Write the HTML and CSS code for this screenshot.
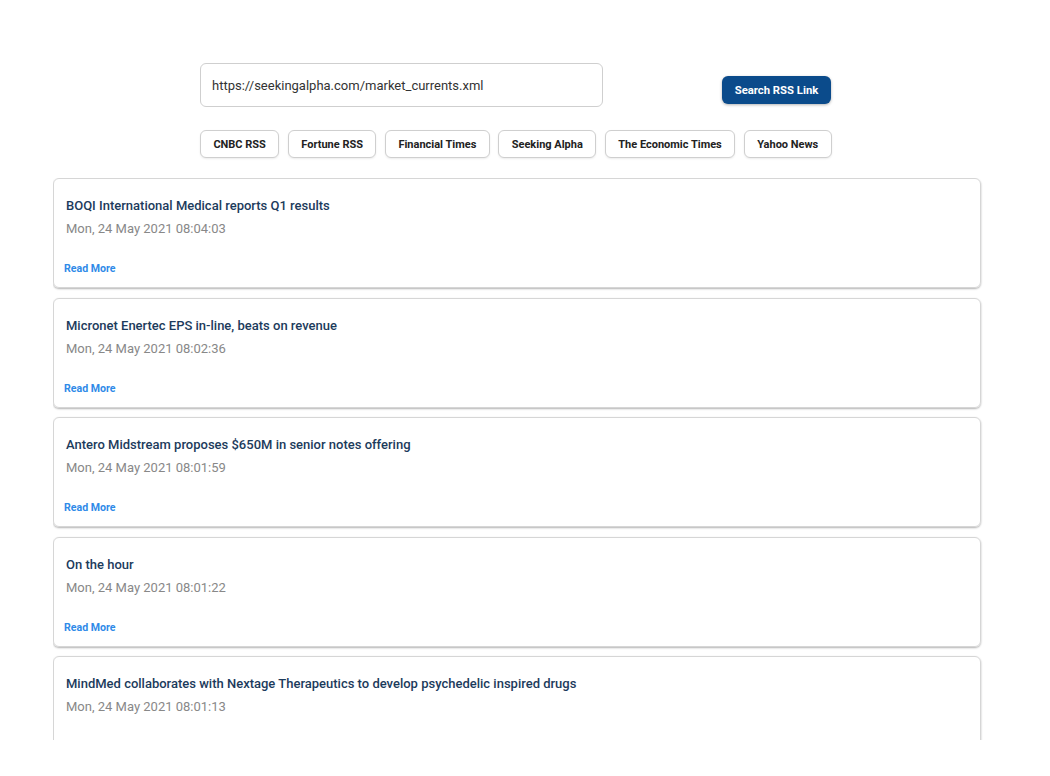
FILE: index.html
```html
<!DOCTYPE html>
<html>
<head>
<meta charset="utf-8">
<link rel="stylesheet" href="styles.css">
</head>
<body>
<div class="page">
  <div class="search-row">
    <input class="url-input" type="text" value="https://seekingalpha.com/market_currents.xml">
    <button class="search-btn">Search RSS Link</button>
  </div>
  <div class="chips">
    <button class="chip">CNBC RSS</button>
    <button class="chip">Fortune RSS</button>
    <button class="chip">Financial Times</button>
    <button class="chip">Seeking Alpha</button>
    <button class="chip">The Economic Times</button>
    <button class="chip">Yahoo News</button>
  </div>
  <div class="feed">
    <div class="card">
      <div class="title">BOQI International Medical reports Q1 results</div>
      <div class="date">Mon, 24 May 2021 08:04:03</div>
      <a class="more">Read More</a>
    </div>
    <div class="card">
      <div class="title">Micronet Enertec EPS in-line, beats on revenue</div>
      <div class="date">Mon, 24 May 2021 08:02:36</div>
      <a class="more">Read More</a>
    </div>
    <div class="card">
      <div class="title">Antero Midstream proposes $650M in senior notes offering</div>
      <div class="date">Mon, 24 May 2021 08:01:59</div>
      <a class="more">Read More</a>
    </div>
    <div class="card">
      <div class="title">On the hour</div>
      <div class="date">Mon, 24 May 2021 08:01:22</div>
      <a class="more">Read More</a>
    </div>
    <div class="card">
      <div class="title">MindMed collaborates with Nextage Therapeutics to develop psychedelic inspired drugs</div>
      <div class="date">Mon, 24 May 2021 08:01:13</div>
    </div>
  </div>
</div>
</body>
</html>
```

FILE: styles.css
```css
* { box-sizing: border-box; }
html, body {
  margin: 0;
  padding: 0;
  background: #fff;
  font-family: Roboto, "Liberation Sans", sans-serif;
}
.page {
  width: 1050px;
  height: 776px;
  padding-top: 63px;
}
.search-row {
  display: flex;
  align-items: flex-start;
  margin-left: 200px;
}
.url-input {
  width: 403px;
  height: 44px;
  border: 1px solid #cfcfcf;
  border-radius: 6px;
  padding: 0 11px;
  font-family: Roboto, "Liberation Sans", sans-serif;
  font-size: 13px;
  color: #333;
  outline: none;
}
.search-btn {
  margin-left: 119px;
  margin-top: 13px;
  width: 109px;
  height: 28px;
  border: none;
  border-radius: 6px;
  background: #0b4b8b;
  color: #fff;
  font-family: Roboto, "Liberation Sans", sans-serif;
  font-weight: 700;
  font-size: 11.3px;
  box-shadow: 0 1px 3px rgba(0,0,0,0.3);
  padding: 0;
}
.chips {
  display: flex;
  gap: 8.6px;
  margin-left: 200px;
  margin-top: 23px;
}
.chip {
  height: 28px;
  padding: 0 12.4px;
  border: 1px solid #cfcfcf;
  border-radius: 6px;
  background: #fff;
  color: #222;
  font-family: Roboto, "Liberation Sans", sans-serif;
  font-weight: 700;
  font-size: 11px;
  box-shadow: 0 1px 2px rgba(0,0,0,0.08);
}
.feed {
  margin-top: 20px;
  margin-left: 53px;
  width: 930px;
  height: 562px;
  overflow: hidden;
  display: flex;
  flex-direction: column;
  gap: 9.5px;
  padding-right: 2px;
}
.card {
  flex: none;
  width: 928px;
  height: 110px;
  border: 1px solid #d6d6d6;
  border-radius: 6px;
  box-shadow: 0 1px 2px rgba(0,0,0,0.3);
  padding: 17px 12px 0 12px;
  display: flex;
  flex-direction: column;
}
.title {
  font-size: 13px;
  font-weight: 500;
  line-height: 20px;
  color: #1c3b5c;
}
.date {
  margin-top: 3px;
  font-size: 13px;
  line-height: 20px;
  color: #888;
}
.more {
  margin-top: 23px;
  margin-left: -2px;
  font-size: 10.6px;
  font-weight: 700;
  line-height: 14px;
  color: #2f8ae8;
}
```
